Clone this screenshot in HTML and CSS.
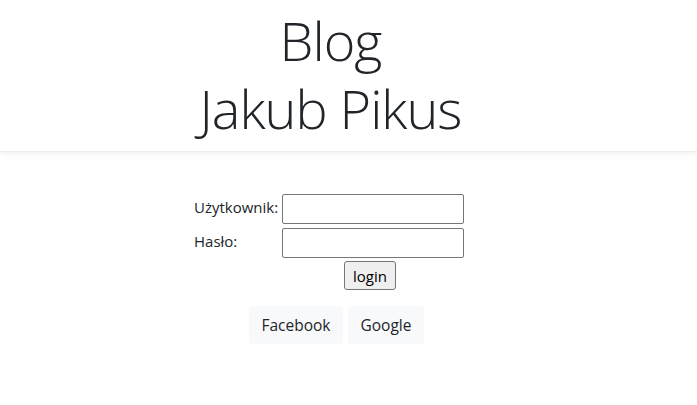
FILE: index.html
```html
<!DOCTYPE html>
<html lang="pl">
<head>
<meta charset="utf-8">
<title>Blog Jakub Pikus</title>
<link rel="stylesheet" href="styles.css">
</head>
<body>
<header class="site-header">
  <h1 class="title">Blog<br>Jakub Pikus</h1>
</header>
<main class="main">
  <form class="login-form">
    <label class="lbl" for="user">Użytkownik:</label>
    <input class="field" id="user" type="text">
    <label class="lbl" for="pass">Hasło:</label>
    <input class="field" id="pass" type="password">
    <span></span>
    <div class="submit-cell"><button type="button" class="login-btn">login</button></div>
  </form>
  <div class="social">
    <a class="soc-btn">Facebook</a>
    <a class="soc-btn">Google</a>
  </div>
</main>
</body>
</html>
```
FILE: styles.css
```css
html, body {
  margin: 0;
  padding: 0;
  background: #fff;
}
body {
  font-family: "Open Sans", "Noto Sans", "Liberation Sans", sans-serif;
  font-size: 16px;
  color: #212529;
}
.site-header {
  height: 152px;
  box-sizing: border-box;
  border-bottom: 1px solid #ececec;
  box-shadow: 0 2px 5px rgba(0, 0, 0, 0.06);
  display: flex;
  justify-content: center;
  padding-right: 36px;
  padding-top: 6px;
}
.title {
  margin: 0;
  font-size: 54px;
  font-weight: 300;
  line-height: 68px;
  text-align: center;
  color: #212529;
  letter-spacing: -1px;
}
.main {
  display: flex;
  flex-direction: column;
  align-items: center;
  padding-right: 40px;
  padding-top: 42px;
}
.login-form {
  display: grid;
  grid-template-columns: 85px 182px;
  column-gap: 3px;
  row-gap: 4px;
  align-items: center;
  margin-left: 1px;
}
.lbl {
  font-size: 15px;
  line-height: 20px;
  white-space: nowrap;
  align-self: start;
  padding-top: 3px;
}
.field {
  box-sizing: border-box;
  width: 182px;
  height: 30px;
  margin: 0;
  border: 1px solid #767676;
  border-radius: 2px;
  padding: 1px 2px;
  font: inherit;
}
.submit-cell {
  display: flex;
  justify-content: center;
  padding-right: 6px;
  margin-top: -1px;
}
.login-btn {
  box-sizing: border-box;
  height: 29px;
  width: 52px;
  padding: 0;
  margin: 0;
  font-family: inherit;
  font-size: 15px;
  color: #000;
  background: #efefef;
  border: 1px solid #767676;
  border-radius: 3px;
}
.social {
  display: flex;
  gap: 5px;
  margin-top: 16px;
  padding-left: 16px;
}
.soc-btn {
  display: inline-block;
  padding: 6px 12.5px;
  font-size: 15.5px;
  line-height: 26px;
  background: #f8f9fa;
  border-radius: 4px;
  color: #212529;
}
```
